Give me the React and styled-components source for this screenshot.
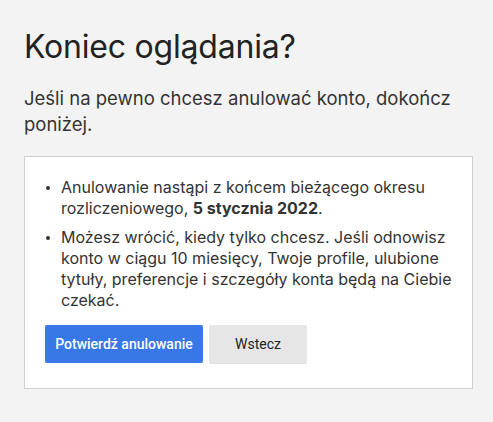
import styled, { createGlobalStyle } from "styled-components";

const GlobalStyle = createGlobalStyle`
  body {
    margin: 0;
    background: #f3f3f3;
    font-family: Inter, "Noto Sans", sans-serif;
    color: #222;
  }
`;

const Page = styled.main`
  padding: 26px 20px 0 24px;
`;

const Title = styled.h1`
  margin: 0;
  font-size: 32px;
  font-weight: 400;
  line-height: 42px;
  color: #222;
  letter-spacing: -0.2px;
`;

const Lead = styled.p`
  margin: 17px 0 19px;
  font-size: 18.5px;
  line-height: 26px;
  color: #333;
`;

const Box = styled.section`
  background: #fff;
  border: 1px solid #cfcfcf;
  padding: 20px 20px 25px;
`;

const List = styled.ul`
  list-style: none;
  margin: 0 0 14px;
  padding: 0;
  display: flex;
  flex-direction: column;
  gap: 8px;
`;

const Item = styled.li`
  position: relative;
  padding-left: 16px;
  font-size: 16px;
  line-height: 21px;
  color: #333;

  &::before {
    content: "";
    position: absolute;
    left: 1px;
    top: 9px;
    width: 4px;
    height: 4px;
    border-radius: 50%;
    background: #333;
  }
`;

const Actions = styled.div`
  display: flex;
  gap: 6px;
`;

const Button = styled.button`
  height: 38px;
  width: ${(p) => p.$width}px;
  padding: 0;
  border: none;
  border-radius: 2px;
  white-space: nowrap;
  font-family: Roboto, "Liberation Sans", sans-serif;
  font-size: 14px;
  font-weight: ${(p) => (p.$primary ? 500 : 400)};
  cursor: pointer;
  background: ${(p) => (p.$primary ? "#3877e6" : "#e6e6e6")};
  color: ${(p) => (p.$primary ? "#fff" : "#222")};
  box-shadow: ${(p) => (p.$primary ? "none" : "0 1px 0 rgba(0,0,0,0.12)")};
`;

export default function App() {
  return (
    <>
      <GlobalStyle />
      <Page>
        <Title>Koniec oglądania?</Title>
        <Lead>Jeśli na pewno chcesz anulować konto, dokończ poniżej.</Lead>
        <Box>
          <List>
            <Item>
              Anulowanie nastąpi z końcem bieżącego okresu rozliczeniowego,{" "}
              <strong>5 stycznia 2022</strong>.
            </Item>
            <Item>
              Możesz wrócić, kiedy tylko chcesz. Jeśli odnowisz konto w ciągu 10
              miesięcy, Twoje profile, ulubione tytuły, preferencje i szczegóły
              konta będą na Ciebie czekać.
            </Item>
          </List>
          <Actions>
            <Button $primary $width={158}>
              Potwierdź anulowanie
            </Button>
            <Button $width={98}>Wstecz</Button>
          </Actions>
        </Box>
      </Page>
    </>
  );
}
